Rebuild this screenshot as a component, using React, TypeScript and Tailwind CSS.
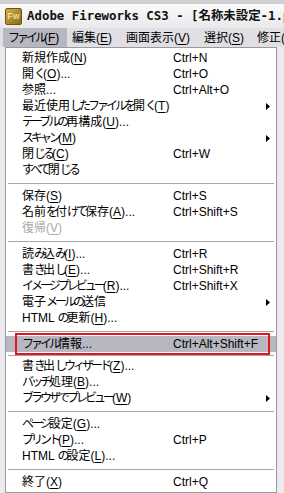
type Entry =
  | 'sep'
  | 'sep-s'
  | {
      label: string
      key?: string
      suffix?: string
      shortcut?: string
      sub?: boolean
      disabled?: boolean
      hl?: boolean
    }

const entries: Entry[] = [
  { label: '新規作成', key: 'N', shortcut: 'Ctrl+N' },
  { label: '開く', key: 'O', suffix: '...', shortcut: 'Ctrl+O' },
  { label: '参照...', shortcut: 'Ctrl+Alt+O' },
  { label: '最近使用したファイルを開く', key: 'T', sub: true },
  { label: 'テーブルの再構成', key: 'U', suffix: '...' },
  { label: 'スキャン', key: 'M', sub: true },
  { label: '閉じる', key: 'C', shortcut: 'Ctrl+W' },
  { label: 'すべて閉じる' },
  'sep',
  { label: '保存', key: 'S', shortcut: 'Ctrl+S' },
  { label: '名前を付けて保存', key: 'A', suffix: '...', shortcut: 'Ctrl+Shift+S' },
  { label: '復帰', key: 'V', disabled: true },
  'sep',
  { label: '読み込み', key: 'I', suffix: '...', shortcut: 'Ctrl+R' },
  { label: '書き出し', key: 'E', suffix: '...', shortcut: 'Ctrl+Shift+R' },
  { label: 'イメージプレビュー', key: 'R', suffix: '...', shortcut: 'Ctrl+Shift+X' },
  { label: '電子メールの送信', sub: true },
  { label: 'HTML の更新', key: 'H', suffix: '...' },
  'sep',
  { label: 'ファイル情報...', shortcut: 'Ctrl+Alt+Shift+F', hl: true },
  'sep-s',
  { label: '書き出しウィザード', key: 'Z', suffix: '...' },
  { label: 'バッチ処理', key: 'B', suffix: '...' },
  { label: 'ブラウザでプレビュー', key: 'W', sub: true },
  'sep',
  { label: 'ページ設定', key: 'G', suffix: '...' },
  { label: 'プリント', key: 'P', suffix: '...', shortcut: 'Ctrl+P' },
  { label: 'HTML の設定', key: 'L', suffix: '...' },
  'sep',
  { label: '終了', key: 'X', shortcut: 'Ctrl+Q' },
]

const menuBar = [
  { label: 'ファイル', key: 'F', w: 'w-[64px]', active: true },
  { label: '編集', key: 'E', w: 'w-[54px]' },
  { label: '画面表示', key: 'V', w: 'w-[78px]' },
  { label: '選択', key: 'S', w: 'w-[53px]' },
  { label: '修正', key: 'M', w: 'w-[60px]' },
]

// MS UI Gothic draws kana narrower than kanji; tighten kana runs to match
function Jp({ text }: { text: string }) {
  const parts = text.split(/([\u3040-\u30ff]+)/).filter(Boolean)
  return (
    <>
      {parts.map((p, i) =>
        /[\u3040-\u30ff]/.test(p) ? (
          <span key={i} className="tracking-[-3px]">
            {p}
          </span>
        ) : (
          <span key={i}>{p}</span>
        ),
      )}
    </>
  )
}

function Label({ label, k, suffix }: { label: string; k?: string; suffix?: string }) {
  return (
    <span>
      <Jp text={label} />
      {k && (
        <>
          (<span className="underline underline-offset-2">{k}</span>)
        </>
      )}
      {suffix}
    </span>
  )
}

export default function App() {
  return (
    <div className="w-[284px] h-[493px] overflow-hidden bg-[#ebeaee] flex flex-col font-['Liberation_Sans','Noto_Sans_CJK_JP',sans-serif] text-[12px] text-black">
      {/* title bar */}
      <div className="h-[28px] shrink-0 border-t-[4px] border-[#cfcfd4] bg-gradient-to-b from-[#fbfbfb] to-[#e9e9ec] flex items-center pl-[5px] gap-[5px] whitespace-nowrap">
        <div className="w-[17px] h-[17px] shrink-0 rounded-[2px] bg-gradient-to-br from-[#d7b241] to-[#8b6a12] border border-[#6e5410] flex items-center justify-center text-[9px] leading-none text-[#fff6c8] font-['Liberation_Sans',sans-serif]">
          Fw
        </div>
        <span className="font-bold text-[12.4px] font-['DejaVu_Sans_Mono','Noto_Sans_CJK_JP',monospace] text-[#111]">
          Adobe Fireworks CS3 - [名称未設定-1.png]
        </span>
      </div>

      {/* menu bar */}
      <div className="h-[19px] shrink-0 bg-[#e0dfe3] flex items-stretch pl-[3px] whitespace-nowrap overflow-hidden">
        {menuBar.map((m) => (
          <div
            key={m.label}
            className={`${m.w} shrink-0 flex items-center pl-[5px] ${m.active ? 'bg-[#b6b7c0]' : ''}`}
          >
            <Label label={m.label} k={m.key} />
          </div>
        ))}
      </div>

      {/* dropdown */}
      <div className="flex-1 flex">
        <div className="ml-[5px] w-[272px] bg-white border border-[#9a9a9e] pt-[2px] pb-[2px] flex flex-col">
          {entries.map((e, i) =>
            e === 'sep' || e === 'sep-s' ? (
              <div key={i} className={`${e === 'sep' ? 'h-[10px]' : 'h-[6px]'} flex items-center px-[2px]`}>
                <div className="h-px w-full bg-[#a6a6aa]" />
              </div>
            ) : (
              <div
                key={i}
                className={`relative h-[16px] flex items-center pl-[16px] whitespace-nowrap ${
                  e.hl ? 'bg-[#b6b7c0]' : ''
                } ${e.disabled ? 'text-[#a9a9a9]' : ''}`}
              >
                <div className="w-[151px] shrink-0">
                  <Label label={e.label} k={e.key} suffix={e.suffix} />
                </div>
                <div className="flex-1">{e.shortcut}</div>
                {e.sub && (
                  <svg width="4" height="7" viewBox="0 0 4 7" className="mr-[6px]">
                    <path d="M0 0 L4 3.5 L0 7 Z" fill="#000" />
                  </svg>
                )}
                {e.hl && (
                  <div className="absolute z-10 left-[9px] w-[255px] -top-[3px] -bottom-[3px] border-2 border-[#e8141c]" />
                )}
              </div>
            ),
          )}
        </div>
      </div>
    </div>
  )
}
